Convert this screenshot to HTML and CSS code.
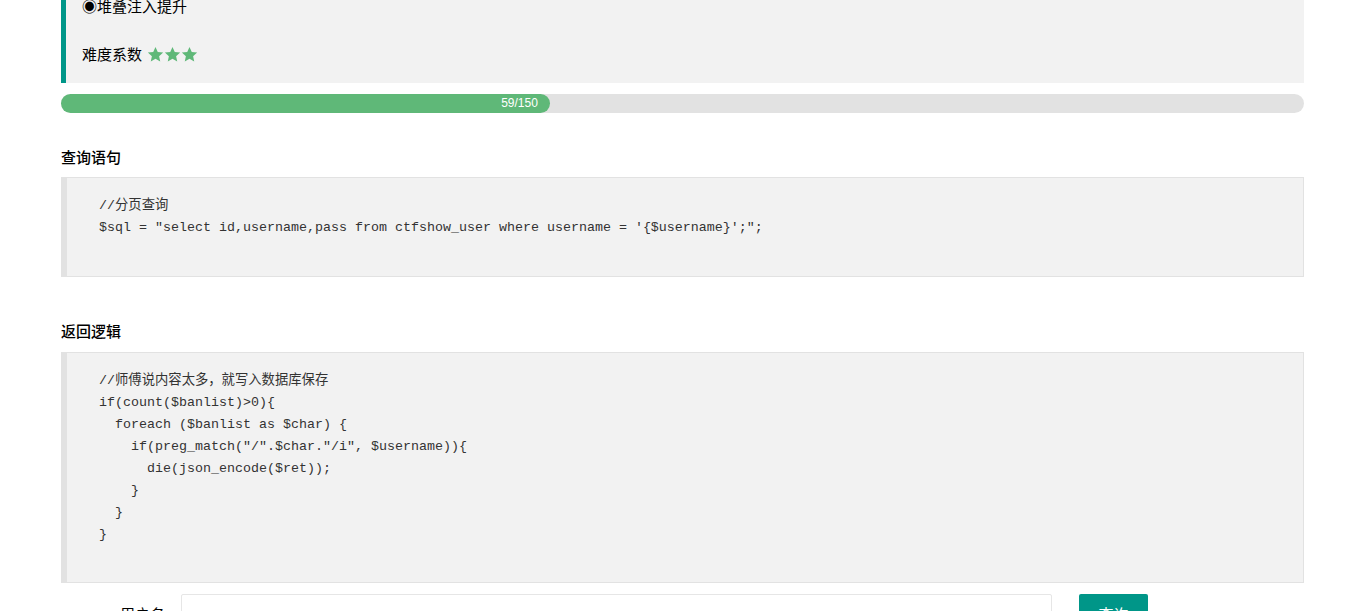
FILE: index.html
```html
<!DOCTYPE html>
<html lang="zh-CN">
<head>
  <meta charset="UTF-8" />
  <meta name="viewport" content="width=device-width, initial-scale=1.0" />
  <title>ctfshow</title>
  <link rel="stylesheet" href="styles.css">
</head>
<body>
  <div class="container">
    <blockquote class="quote">
      <div class="quote-title">◉堆叠注入提升</div>
      <div class="quote-blank"></div>
      <div class="quote-rating">
        <span>难度系数</span>
        <span class="stars">
          <svg viewBox="0 0 24 24"><path d="M12 1.5l3.2 7 7.6.8-5.7 5.1 1.6 7.5L12 18l-6.7 3.9 1.6-7.5L1.2 9.3l7.6-.8z"/></svg>
          <svg viewBox="0 0 24 24"><path d="M12 1.5l3.2 7 7.6.8-5.7 5.1 1.6 7.5L12 18l-6.7 3.9 1.6-7.5L1.2 9.3l7.6-.8z"/></svg>
          <svg viewBox="0 0 24 24"><path d="M12 1.5l3.2 7 7.6.8-5.7 5.1 1.6 7.5L12 18l-6.7 3.9 1.6-7.5L1.2 9.3l7.6-.8z"/></svg>
        </span>
      </div>
    </blockquote>

    <div class="progress">
      <div class="progress-bar" style="width: 39.33%;">
        <span class="progress-text">59/150</span>
      </div>
    </div>

    <h3 class="section-title first">查询语句</h3>
    <pre class="code"><div>//分页查询</div><div>$sql = "select id,username,pass from ctfshow_user where username = '{$username}';";</div><div>&nbsp;</div></pre>

    <h3 class="section-title">返回逻辑</h3>
    <pre class="code code-long"><div>//师傅说内容太多，就写入数据库保存</div><div>if(count($banlist)&gt;0){</div><div class="lv1">foreach ($banlist as $char) {</div><div class="lv2">if(preg_match("/".$char."/i", $username)){</div><div class="lv3">die(json_encode($ret));</div><div class="lv2">}</div><div class="lv1">}</div><div>}</div><div>&nbsp;</div></pre>

    <form class="query-form" onsubmit="return false;">
      <label class="form-label" for="username">用户名</label>
      <input class="form-input" id="username" type="text" />
      <button class="form-btn" type="submit">查询</button>
    </form>
  </div>
</body>
</html>
```

FILE: styles.css
```css
body {
  margin: 0;
  font-family: "Noto Sans CJK SC", "Liberation Sans", sans-serif;
  color: #000;
  background: #fff;
  overflow: hidden;
}

.container {
  width: 1243px;
  margin: -21px 0 0 61px;
}

.quote {
  margin: 0;
  padding: 15px 16px 17px 16px;
  border-left: 5px solid #009688;
  background-color: #f2f2f2;
  font-size: 15px;
  line-height: 24px;
}

.quote-blank {
  height: 24px;
}

.quote-rating {
  display: flex;
  align-items: center;
  gap: 5px;
}

.stars {
  display: flex;
  gap: 0;
}

.stars svg {
  width: 17px;
  height: 17px;
  fill: #5fb878;
}

.progress {
  position: relative;
  margin-top: 11px;
  height: 19px;
  border-radius: 20px;
  background-color: #e2e2e2;
}

.progress-bar {
  position: relative;
  height: 19px;
  border-radius: 20px;
  background-color: #5fb878;
}

.progress-text {
  position: absolute;
  right: 12px;
  top: 0;
  line-height: 19px;
  font-size: 12px;
  color: #fff;
  font-family: "Liberation Sans", sans-serif;
}

.section-title {
  margin: 44px 0 11px;
  font-size: 15px;
  font-weight: 500;
  line-height: 20px;
}

.section-title.first {
  margin-top: 34px;
  margin-bottom: 10px;
}

.code {
  margin: 0;
  padding: 17px 15px 15px 32px;
  border: 1px solid #e2e2e2;
  border-left-width: 6px;
  background-color: #f2f2f2;
  color: #333;
  font-family: "Liberation Mono", "Noto Sans CJK SC", monospace;
  font-size: 13.33px;
  line-height: 22px;
  white-space: pre;
}

.code-long {
  padding-bottom: 14px;
}

.lv1 { padding-left: 16px; }
.lv2 { padding-left: 32px; }
.lv3 { padding-left: 48px; }

.query-form {
  display: flex;
  align-items: center;
  margin-top: 11px;
}

.form-label {
  width: 104px;
  padding-right: 16px;
  text-align: right;
  font-size: 15px;
}

.form-input {
  width: 871px;
  height: 38px;
  box-sizing: border-box;
  border: 1px solid #e6e6e6;
  border-radius: 2px;
  padding: 0 10px;
}

.form-btn {
  margin-left: 27px;
  width: 69px;
  height: 38px;
  border: none;
  border-radius: 2px;
  background-color: #009688;
  color: #fff;
  font-size: 15px;
  font-family: inherit;
}
```
